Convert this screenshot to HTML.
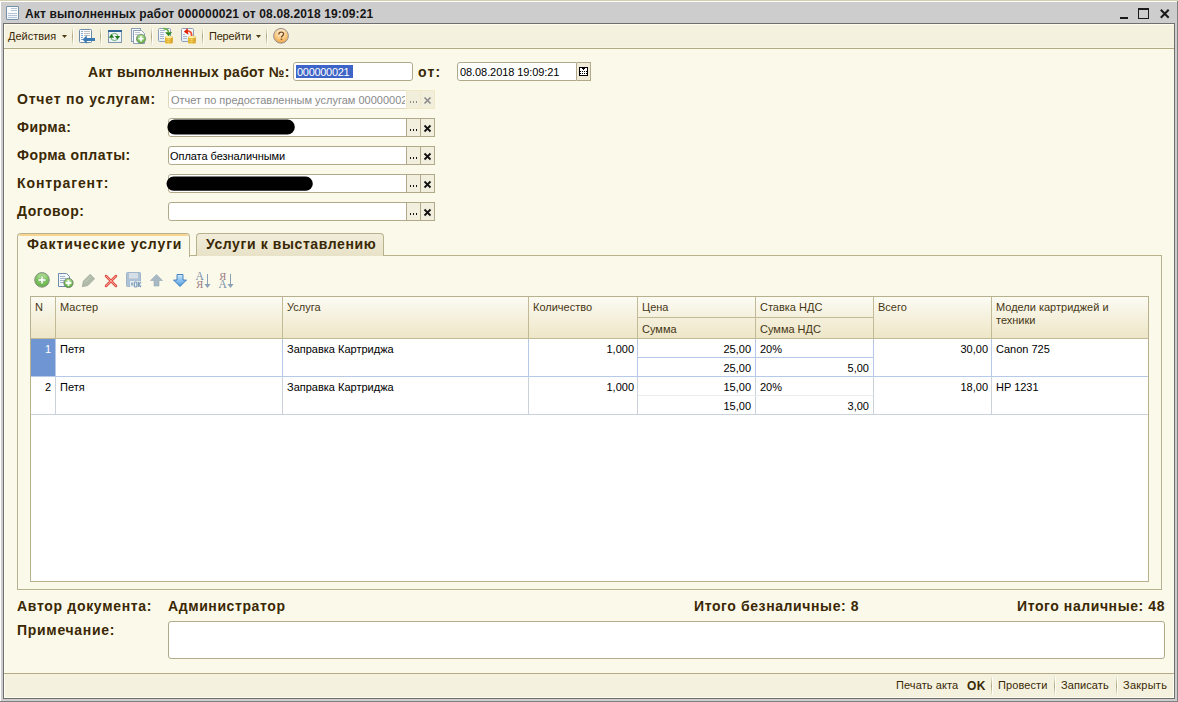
<!DOCTYPE html>
<html><head><meta charset="utf-8">
<style>
*{box-sizing:border-box}
html,body{margin:0;padding:0}
body{width:1178px;height:702px;overflow:hidden;position:relative;background:#cdcdcd;font-family:"Liberation Sans",sans-serif;font-size:11px;color:#000}
.a{position:absolute}
.t{position:absolute;white-space:nowrap;line-height:11px;font-size:11px;color:#000}
.tb{position:absolute;white-space:nowrap;line-height:14px;font-size:14px;font-weight:bold;color:#3a2804}
.br{color:#3a2804}
.hd{position:absolute;white-space:nowrap;line-height:11px;font-size:11px;color:#463714}
.fld{position:absolute;background:#fff;border:1px solid #b1aa8a;border-radius:3px 0 0 3px}
.btn{position:absolute;background:#f3f0df;border:1px solid #b1aa8a;border-left:none}
.sep{position:absolute;width:2px;border-left:1px solid #d9d2b4;border-right:1px solid #fffdf2}
</style></head><body>
<!-- window frame -->
<div class="a" style="left:0;top:0;width:1178px;height:1px;background:#d5d0b2"></div>
<div class="a" style="left:0;top:1px;width:1177px;height:1px;background:#fff"></div>
<div class="a" style="left:0;top:1px;width:1px;height:700px;background:#fff"></div>
<div class="a" style="left:1177px;top:1px;width:1px;height:701px;background:#808080"></div>
<div class="a" style="left:0;top:701px;width:1178px;height:1px;background:#808080"></div>

<!-- title bar -->
<div class="a" id="ticon" style="left:6px;top:6px;width:13px;height:14px;border:1px solid #7490a8;border-radius:1px;background:linear-gradient(#fff,#f0f5fa)">
  <div class="a" style="left:4px;top:1px;width:6px;height:1px;background:#b4c6d6"></div>
  <div class="a" style="left:4px;top:3px;width:6px;height:1px;background:#b4c6d6"></div>
  <div class="a" style="left:1px;top:6px;width:9px;height:1px;background:#b4c6d6"></div>
  <div class="a" style="left:1px;top:8px;width:9px;height:1px;background:#b4c6d6"></div>
  <div class="a" style="left:1px;top:10px;width:9px;height:1px;background:#b4c6d6"></div>
</div>
<div class="a" style="left:25px;top:8px;white-space:nowrap;font-weight:bold;font-size:12px;line-height:12px;color:#161616;letter-spacing:0.14px">Акт выполненных работ 000000021 от 08.08.2018 19:09:21</div>
<!-- min / max / close -->
<div class="a" style="left:1120px;top:17px;width:8px;height:2px;background:#1a1a1a"></div>
<div class="a" style="left:1138px;top:8px;width:11px;height:11px;border:1px solid #1a1a1a;border-top-width:2px"></div>
<svg class="a" style="left:1159px;top:8px" width="12" height="12" viewBox="0 0 12 12"><path d="M1.8 1.8L9.7 9.7M9.7 1.8L1.8 9.7" stroke="#1a1a1a" stroke-width="2.1"/></svg>

<!-- content border -->
<div class="a" style="left:3px;top:23px;width:1172px;height:676px;border:1px solid #6f6f6f;background:#fbf9ea"></div>

<!-- toolbar -->
<div class="a" id="toolbar" style="left:4px;top:24px;width:1170px;height:25px;background:#f4f2df;border-bottom:1px solid #b3ab86"></div>


<!-- toolbar content -->
<div class="t br" style="left:8px;top:31px">Действия</div>
<div class="t br" style="left:209px;top:31px;letter-spacing:-0.2px">Перейти</div>
<svg class="a" style="left:0;top:0" width="300" height="50" viewBox="0 0 300 50">
 <defs>
  <linearGradient id="sepg" x1="0" y1="0" x2="0" y2="1"><stop offset="0" stop-color="#f4f2df"/><stop offset="0.5" stop-color="#aea680"/><stop offset="1" stop-color="#f4f2df"/></linearGradient><linearGradient id="sepg2" x1="0" y1="0" x2="0" y2="1"><stop offset="0" stop-color="#f4f2df"/><stop offset="0.5" stop-color="#aea680"/><stop offset="1" stop-color="#f4f2df"/></linearGradient>
  <radialGradient id="helpg" cx="0.5" cy="0.3" r="0.75"><stop offset="0" stop-color="#fff4e0"/><stop offset="0.55" stop-color="#f8c880"/><stop offset="1" stop-color="#eb9a3a"/></radialGradient>
  <radialGradient id="grn2" cx="0.5" cy="0.3" r="0.75"><stop offset="0" stop-color="#c4e8a8"/><stop offset="0.6" stop-color="#78c05a"/><stop offset="1" stop-color="#5aa83e"/></radialGradient><linearGradient id="coinh" x1="0" y1="0" x2="1" y2="0"><stop offset="0" stop-color="#e8b830"/><stop offset="0.45" stop-color="#ffe878"/><stop offset="1" stop-color="#d89a20"/></linearGradient><linearGradient id="docg" x1="0" y1="0" x2="0" y2="1"><stop offset="0" stop-color="#ffffff"/><stop offset="1" stop-color="#e4eef8"/></linearGradient>
 </defs>
 <path d="M62 35h5l-2.5 3z" fill="#4a3a10"/>
 <path d="M256 35h5l-2.5 3z" fill="#4a3a10"/>
 <g>
  <rect x="72" y="27" width="1" height="19" fill="url(#sepg)"/><rect x="73" y="28" width="1" height="17" fill="#fffef6"/>
  <rect x="100" y="27" width="1" height="19" fill="url(#sepg)"/><rect x="101" y="28" width="1" height="17" fill="#fffef6"/>
  <rect x="151" y="27" width="1" height="19" fill="url(#sepg)"/><rect x="152" y="28" width="1" height="17" fill="#fffef6"/>
  <rect x="202" y="27" width="1" height="19" fill="url(#sepg)"/><rect x="203" y="28" width="1" height="17" fill="#fffef6"/>
  <rect x="266" y="27" width="1" height="19" fill="url(#sepg)"/><rect x="267" y="28" width="1" height="17" fill="#fffef6"/>
 </g>
 <!-- icon1 doc + left arrow -->
 <rect x="79.5" y="29.5" width="12" height="13" rx="1" fill="#fff" stroke="#6a8aa8"/>
 <g fill="#88aad0"><rect x="81" y="31" width="2" height="1"/><rect x="81" y="33" width="2" height="1"/><rect x="81" y="35" width="2" height="1"/><rect x="81" y="37" width="2" height="1"/><rect x="81" y="39" width="2" height="1"/></g>
 <g fill="#c0c0c0"><rect x="84" y="31" width="6" height="1"/><rect x="84" y="33" width="6" height="1"/><rect x="84" y="35" width="6" height="1"/></g>
 <path d="M82.5 39.5L86.8 35.3V38H95V41H86.8V43.8z" fill="#3d7ab4"/>
 <!-- icon2 window refresh -->
 <rect x="108.5" y="30.5" width="13" height="12" fill="#eef3f8" stroke="#7f96ac"/>
 <rect x="108" y="30" width="14" height="2" fill="#2d6898"/>
 <circle cx="114.5" cy="37" r="3.6" fill="none" stroke="#5aa85a" stroke-width="0.9"/>
 <path d="M108.8 37.8L111.5 34L114.2 37.8z" fill="#1f7a1f"/>
 <path d="M114.8 36L120.2 36L117.5 39.6z" fill="#1f7a1f"/>
 <!-- icon3 copy + plus -->
 <rect x="131.5" y="28.5" width="9" height="13" fill="#f4f6fa" stroke="#8a9cb6"/>
 <path d="M133.5 30.5H141.5L144.5 33.5V43.5H133.5z" fill="#fff" stroke="#8a9eb4"/>
 <g fill="#b8c4d0"><rect x="135" y="32" width="5" height="1"/><rect x="135" y="34" width="3" height="1"/></g>
 <circle cx="141" cy="38.8" r="4.6" fill="url(#grn2)" stroke="#7a8a78" stroke-width="0.9"/>
 <path d="M140.2 36.2h1.6v1.8h1.8v1.6h-1.8v1.8h-1.6v-1.8h-1.8v-1.6h1.8z" fill="#fff"/>
 <!-- icon4 doc + green arrow + coins -->
 <rect x="158.5" y="28.5" width="12" height="13" rx="1.2" fill="url(#docg)" stroke="#8ba0b6"/>
 <g fill="#a9b9ca"><rect x="160" y="30" width="5" height="1"/><rect x="160" y="32" width="4" height="1"/><rect x="160" y="34" width="4" height="1"/><rect x="160" y="36" width="4" height="1"/><rect x="160" y="38" width="4" height="1"/></g>
 <path d="M163.5 28.6C166.5 28.6 168.3 30 168.6 32.5" fill="none" stroke="#6ab04a" stroke-width="1.7"/>
 <path d="M165 32.2H172.2L168.6 36.2z" fill="#2f861f"/>
 <g id="coins4">
 <rect x="165" y="36" width="7.8" height="7.8" rx="2.2" fill="url(#coinh)"/>
 <g fill="#d49a18" opacity="0.85"><rect x="165.3" y="38.4" width="7.2" height="0.9"/><rect x="165.3" y="40.4" width="7.2" height="0.9"/><rect x="165.3" y="42.3" width="7.2" height="0.8"/></g>
 <ellipse cx="168.9" cy="37.2" rx="3.2" ry="1" fill="#fff5a8"/>
 </g>
 <!-- icon5 doc + red arrow + coins -->
 <rect x="181.5" y="28.5" width="12" height="13" rx="1.2" fill="url(#docg)" stroke="#8ba0b6"/>
 <g fill="#a9b9ca"><rect x="183" y="34" width="2" height="1"/><rect x="183" y="36" width="4" height="1"/><rect x="183" y="38" width="4" height="1"/></g>
 <path d="M187 30.8C190.5 30.8 191.8 32.5 191.6 36" fill="none" stroke="#f0502c" stroke-width="1.8"/>
 <path d="M183.8 31.8L187.6 27.9L188.4 34.8z" fill="#e2260e"/>
 <rect x="188" y="36" width="7.8" height="7.8" rx="2.2" fill="url(#coinh)"/>
 <g fill="#d49a18" opacity="0.85"><rect x="188.3" y="38.4" width="7.2" height="0.9"/><rect x="188.3" y="40.4" width="7.2" height="0.9"/><rect x="188.3" y="42.3" width="7.2" height="0.8"/></g>
 <ellipse cx="191.9" cy="37.2" rx="3.2" ry="1" fill="#fff5a8"/>
 <!-- help -->
 <circle cx="281" cy="35.8" r="7.4" fill="url(#helpg)" stroke="#8a8a90" stroke-width="0.9"/>
 <path d="M278.8 34.4C278.8 32.8 280 32.1 281.2 32.1C282.6 32.1 283.6 33 283.6 34.1C283.6 35.8 281.4 35.9 281.4 37.6" fill="none" stroke="#7a4a1e" stroke-width="1.3"/><rect x="280.7" y="38.6" width="1.5" height="1.3" fill="#7a4a1e"/>
</svg>


<!-- header -->
<div class="tb" style="left:88px;top:65px;letter-spacing:0.28px">Акт выполненных работ №:</div>
<div class="fld" style="left:293px;top:62px;width:120px;height:19px;border-radius:3px"></div>
<div class="a" style="left:296px;top:65px;width:57px;height:13px;background:#3d64c6"></div>
<div class="t" style="left:297px;top:67px;color:#fff;letter-spacing:-0.3px">000000021</div>
<div class="tb" style="left:418px;top:65px;letter-spacing:1.2px">от:</div>
<div class="fld" style="left:457px;top:62px;width:120px;height:19px"></div>
<div class="btn" style="left:577px;top:62px;width:14px;height:19px;background:#efebd8"></div>
<svg class="a" style="left:576px;top:62px" width="15" height="19" viewBox="576 62 15 19" shape-rendering="crispEdges">
 <rect x="579" y="67" width="9" height="9" fill="#000"/>
 <rect x="580" y="69" width="7" height="6" fill="#fff"/>
 <rect x="580" y="68" width="2" height="1" fill="#fff"/><rect x="585" y="68" width="2" height="1" fill="#fff"/>
 <rect x="582" y="68" width="3" height="1" fill="#000"/><rect x="583" y="69" width="1" height="1" fill="#000"/>
 <rect x="582" y="71" width="1" height="1" fill="#000"/><rect x="584" y="71" width="1" height="1" fill="#000"/>
 <rect x="582" y="73" width="1" height="1" fill="#000"/><rect x="584" y="73" width="1" height="1" fill="#000"/>
 <rect x="580" y="71" width="1" height="1" fill="#000"/><rect x="586" y="71" width="1" height="1" fill="#000"/><rect x="580" y="73" width="1" height="1" fill="#000"/><rect x="586" y="73" width="1" height="1" fill="#000"/>
</svg>
<div class="t" style="left:460px;top:67px;letter-spacing:-0.08px">08.08.2018 19:09:21</div>

<div class="tb" style="left:17px;top:92px;letter-spacing:0.8px">Отчет по услугам:</div>
<div class="tb" style="left:17px;top:120px;letter-spacing:0.45px">Фирма:</div>
<div class="tb" style="left:17px;top:148px;letter-spacing:0.45px">Форма оплаты:</div>
<div class="tb" style="left:17px;top:176px;letter-spacing:0.9px">Контрагент:</div>
<div class="tb" style="left:17px;top:204px;letter-spacing:0.55px">Договор:</div>

<!-- field 1 disabled -->
<div class="fld" style="left:168px;top:90px;width:239px;height:19px;border-color:#ddd7bd;overflow:hidden">
  <div class="a" style="left:0;top:0;width:236px;height:17px;overflow:hidden"><div class="t" style="left:2px;top:4px;color:#8a8a8a">Отчет по предоставленным услугам 00000002</div></div>
</div>
<div class="btn" style="left:406px;top:90px;width:15px;height:19px;border:1px solid #f0e8c6;background:#f2eedc"></div>
<div class="btn" style="left:420px;top:90px;width:15px;height:19px;border:1px solid #f0e8c6;background:#f2eedc"></div>
<!-- field 2 -->
<div class="fld" style="left:168px;top:118px;width:239px;height:19px"></div>
<svg class="a" style="left:160px;top:114px" width="150" height="26" viewBox="160 114 150 26"><rect x="167.4" y="119.6" width="127.4" height="14.8" rx="7.4" fill="#000"/></svg>
<!-- field 3 -->
<div class="fld" style="left:168px;top:146px;width:239px;height:19px"></div>
<div class="t" style="left:170px;top:151px;letter-spacing:-0.05px">Оплата безналичными</div>
<!-- field 4 -->
<div class="fld" style="left:168px;top:174px;width:239px;height:19px"></div>
<svg class="a" style="left:160px;top:170px" width="160" height="26" viewBox="160 170 160 26"><rect x="166.5" y="176.6" width="146.3" height="14.2" rx="7.1" fill="#000"/></svg>
<!-- field 5 -->
<div class="fld" style="left:168px;top:202px;width:239px;height:19px"></div>
<svg class="a" style="left:400px;top:85px" width="40" height="140" viewBox="400 85 40 140">
 <g fill="#f2efde" stroke="#b1aa8a">
  <rect x="406.5" y="118.5" width="14" height="18"/><rect x="420.5" y="118.5" width="14" height="18"/>
  <rect x="406.5" y="146.5" width="14" height="18"/><rect x="420.5" y="146.5" width="14" height="18"/>
  <rect x="406.5" y="174.5" width="14" height="18"/><rect x="420.5" y="174.5" width="14" height="18"/>
  <rect x="406.5" y="202.5" width="14" height="18"/><rect x="420.5" y="202.5" width="14" height="18"/>
 </g>
 <g id="dots1" fill="#111" shape-rendering="crispEdges"><rect x="410" y="129" width="1" height="2"/><rect x="413" y="129" width="1" height="2"/><rect x="416" y="129" width="1" height="2"/><rect x="410" y="157" width="1" height="2"/><rect x="413" y="157" width="1" height="2"/><rect x="416" y="157" width="1" height="2"/><rect x="410" y="185" width="1" height="2"/><rect x="413" y="185" width="1" height="2"/><rect x="416" y="185" width="1" height="2"/><rect x="410" y="213" width="1" height="2"/><rect x="413" y="213" width="1" height="2"/><rect x="416" y="213" width="1" height="2"/></g>
 <g stroke="#111" stroke-width="1.8">
  <path d="M424.5 125.5l6 6M430.5 125.5l-6 6"/>
  <path d="M424.5 153.5l6 6M430.5 153.5l-6 6"/>
  <path d="M424.5 181.5l6 6M430.5 181.5l-6 6"/>
  <path d="M424.5 209.5l6 6M430.5 209.5l-6 6"/>
 </g>
 <g fill="#8a8a8a" shape-rendering="crispEdges"><rect x="410" y="101" width="1" height="2"/><rect x="413" y="101" width="1" height="2"/><rect x="416" y="101" width="1" height="2"/></g>
 <path d="M424.5 97.5l6 6M430.5 97.5l-6 6" stroke="#8a8a8a" stroke-width="1.6"/>
</svg>


<!-- tabs -->
<div class="a" style="left:17px;top:255px;width:1145px;height:335px;border:1px solid #b8b18e"></div>
<div class="a" style="left:196px;top:233px;width:188px;height:23px;border:1px solid #b8b18e;border-bottom:none;border-radius:4px 4px 0 0;background:linear-gradient(#f1edda,#e8e2c8)"></div>
<div class="a" style="left:17px;top:233px;width:173px;height:24px;border:1px solid #b8b18e;border-bottom:none;border-radius:4px 4px 0 0;background:#fbf9ea">
  <div class="a" style="left:1px;top:0;right:1px;height:2px;background:#f7d591;border-radius:3px 3px 0 0"></div>
</div>
<div class="tb" style="left:27px;top:237px;letter-spacing:0.9px">Фактические услуги</div>
<div class="tb" style="left:206px;top:237px;letter-spacing:0.6px">Услуги к выставлению</div>

<!-- table toolbar icons -->
<svg class="a" style="left:0;top:260px" width="250" height="35" viewBox="0 260 250 35">
 <defs>
  <radialGradient id="grn" cx="0.5" cy="0.3" r="0.75"><stop offset="0" stop-color="#c4e8a8"/><stop offset="0.6" stop-color="#78c05a"/><stop offset="1" stop-color="#5aa83e"/></radialGradient>
  <linearGradient id="dwn" x1="0" y1="0" x2="0" y2="1"><stop offset="0" stop-color="#cdeafc"/><stop offset="1" stop-color="#4a98e0"/></linearGradient>
 </defs>
 <circle cx="42" cy="279.9" r="7.3" fill="url(#grn)" stroke="#8a9088" stroke-width="1"/>
 <path d="M40.8 276h2.4v2.8h2.8v2.4h-2.8v2.8h-2.4v-2.8h-2.8v-2.4h2.8z" fill="#fff" stroke="#4e9a36" stroke-width="0.5"/>
 <path d="M58.5 273.5H66.5L69.5 276.5V286.5H58.5z" fill="#f4f7fb" stroke="#6f8cab"/>
 <g fill="#a0b4c8"><rect x="60" y="276" width="5" height="1"/><rect x="60" y="278" width="6" height="1"/><rect x="60" y="280" width="4" height="1"/><rect x="60" y="282" width="4" height="1"/></g>
 <circle cx="68.5" cy="283" r="4.6" fill="url(#grn)" stroke="#6a7a68" stroke-width="0.9"/>
 <path d="M67.6 280.2h1.8v1.9h1.9v1.8h-1.9v1.9h-1.8v-1.9h-1.9v-1.8h1.9z" fill="#fff"/>
 <path d="M82.3 286.7L83.3 281.2L90.2 274.3L94.6 278.7L87.8 285.6z" fill="#b0baa8" stroke="#9ea894" stroke-width="0.7"/><path d="M85 282.5L91.5 276" stroke="#c8d0c0" stroke-width="0.9"/>
 <path d="M106 276L116 286M116 276L106 286" stroke="#e25048" stroke-width="2.5" stroke-linecap="round"/>
 <path d="M106 276L116 286M116 276L106 286" stroke="#f7a898" stroke-width="0.9"/>
 <rect x="126.5" y="272.5" width="14" height="14" rx="0.8" fill="#aec2d6" stroke="#a0b6cc"/>
 <rect x="129.5" y="273.5" width="8" height="4.5" fill="#d2e0ea" stroke="#e4e0e0" stroke-width="0.8"/>
 <rect x="130" y="281" width="11" height="6" fill="#e8eef2"/>
 <rect x="131" y="282.5" width="2" height="3" fill="#98b0c4"/>
 <rect x="134.3" y="282" width="2.6" height="5" rx="1" fill="none" stroke="#7f9db8" stroke-width="1.2"/>
 <path d="M138.5 281.8V287M141 281.8L138.8 284.4L141 287" fill="none" stroke="#7f9db8" stroke-width="1.2"/>
 <path d="M150.5 280.5L156.5 274.5L162.5 280.5H159V286H154V280.5z" fill="#a8b8c4" stroke="#98a8b4" stroke-width="0.6"/>
 <path d="M173.5 280L177 280V274.5H183V280H186.5L180 286.5z" fill="url(#dwn)" stroke="#2a6ab0" stroke-width="0.8"/>
 <text x="195.6" y="280" font-family="Liberation Serif" font-size="11.5" fill="#7890a8">A</text>
 <text x="196.2" y="288" font-family="Liberation Serif" font-size="10.5" fill="#9a7a84">Я</text>
 <path d="M207.5 274V285" stroke="#8aa0b4" stroke-width="1"/><path d="M204.5 284H210.5L207.5 288z" fill="#8aa0b4"/>
 <text x="219.2" y="280" font-family="Liberation Serif" font-size="10.5" fill="#9a7a84">Я</text>
 <text x="218.6" y="288" font-family="Liberation Serif" font-size="11.5" fill="#7890a8">A</text>
 <path d="M230.5 274V285" stroke="#8aa0b4" stroke-width="1"/><path d="M227.5 284H233.5L230.5 288z" fill="#8aa0b4"/>
</svg>


<!-- table -->
<div class="a" style="left:30px;top:296px;width:1119px;height:286px;border:1px solid #b8b18e;background:#fff"></div>
<div class="a" style="left:31px;top:297px;width:1117px;height:41px;background:linear-gradient(#fcfbf3,#eee6c7)"></div>
<svg class="a" style="left:0;top:290px" width="1178" height="130" viewBox="0 290 1178 130" shape-rendering="crispEdges">
 <g fill="#c2b996"><rect x="55" y="297" width="1" height="41"/><rect x="282" y="297" width="1" height="41"/><rect x="528" y="297" width="1" height="41"/><rect x="637" y="297" width="1" height="41"/><rect x="755" y="297" width="1" height="41"/><rect x="873" y="297" width="1" height="41"/><rect x="991" y="297" width="1" height="41"/><rect x="31" y="338" width="1117" height="1"/><rect x="638" y="317" width="235" height="1"/></g>
 <rect x="31" y="339" width="24" height="37" fill="#6f96d2"/>
 <g fill="#b6cae8"><rect x="55" y="339" width="1" height="37"/><rect x="282" y="339" width="1" height="37"/><rect x="528" y="339" width="1" height="37"/><rect x="637" y="339" width="1" height="37"/><rect x="755" y="339" width="1" height="37"/><rect x="873" y="339" width="1" height="37"/><rect x="991" y="339" width="1" height="37"/><rect x="31" y="376" width="1117" height="1"/><rect x="638" y="357" width="235" height="1"/></g>
 <g fill="#cbd2dc"><rect x="55" y="377" width="1" height="37"/><rect x="282" y="377" width="1" height="37"/><rect x="528" y="377" width="1" height="37"/><rect x="637" y="377" width="1" height="37"/><rect x="755" y="377" width="1" height="37"/><rect x="873" y="377" width="1" height="37"/><rect x="991" y="377" width="1" height="37"/><rect x="31" y="414" width="1117" height="1"/></g>
 <rect x="638" y="395" width="235" height="1" fill="#ebebeb"/>
</svg>
<div class="hd" style="left:35px;top:302px;">N</div>
<div class="hd" style="left:60px;top:302px;">Мастер</div>
<div class="hd" style="left:287px;top:302px;">Услуга</div>
<div class="hd" style="left:533px;top:302px;">Количество</div>
<div class="hd" style="left:642px;top:302px;">Цена</div>
<div class="hd" style="left:642px;top:324px;">Сумма</div>
<div class="hd" style="left:760px;top:302px;">Ставка НДС</div>
<div class="hd" style="left:760px;top:324px;">Сумма НДС</div>
<div class="hd" style="left:878px;top:302px;">Всего</div>
<div class="hd" style="left:996px;top:302px;">Модели картриджей и</div>
<div class="hd" style="left:996px;top:315px;">техники</div>
<div class="t" style="right:1127px;top:344px;color:#fff">1</div>
<div class="t" style="left:60px;top:344px;">Петя</div>
<div class="t" style="left:287px;top:344px;">Заправка Картриджа</div>
<div class="t" style="right:544px;top:344px;">1,000</div>
<div class="t" style="right:427px;top:344px;">25,00</div>
<div class="t" style="left:760px;top:344px;">20%</div>
<div class="t" style="right:190px;top:344px;">30,00</div>
<div class="t" style="left:996px;top:344px;">Canon 725</div>
<div class="t" style="right:427px;top:363px;">25,00</div>
<div class="t" style="right:309px;top:363px;">5,00</div>
<div class="t" style="right:1127px;top:382px;">2</div>
<div class="t" style="left:60px;top:382px;">Петя</div>
<div class="t" style="left:287px;top:382px;">Заправка Картриджа</div>
<div class="t" style="right:544px;top:382px;">1,000</div>
<div class="t" style="right:427px;top:382px;">15,00</div>
<div class="t" style="left:760px;top:382px;">20%</div>
<div class="t" style="right:190px;top:382px;">18,00</div>
<div class="t" style="left:996px;top:382px;">HP 1231</div>
<div class="t" style="right:427px;top:401px;">15,00</div>
<div class="t" style="right:309px;top:401px;">3,00</div>


<!-- bottom -->
<div class="tb" style="left:17px;top:599px;letter-spacing:0.69px">Автор документа:</div>
<div class="tb" style="left:168px;top:599px;letter-spacing:0.6px">Администратор</div>
<div class="tb" style="left:694px;top:599px;letter-spacing:0.6px">Итого безналичные: 8</div>
<div class="tb" style="left:1017px;top:599px;letter-spacing:0.58px">Итого наличные: 48</div>
<div class="tb" style="left:17px;top:623px;letter-spacing:0.7px">Примечание:</div>
<div class="a" style="left:168px;top:621px;width:997px;height:38px;border:1px solid #b1aa8a;border-radius:3px;background:#fff"></div>

<!-- footer -->
<div class="a" id="footer" style="left:4px;top:673px;width:1170px;height:25px;background:#f4f2df;border-top:1px solid #b3ab86"></div>
<div class="a" style="left:4px;top:24px;width:1170px;height:1px;background:#fffdf0"></div>
<div class="a" style="left:4px;top:47px;width:1170px;height:1px;background:#f8f6e6"></div>
<div class="a" style="left:4px;top:697px;width:1170px;height:1px;background:#fffdf0"></div>
<div class="a" style="left:4px;top:24px;width:1px;height:24px;background:#fffff2"></div>
<div class="a" style="left:4px;top:49px;width:1px;height:624px;background:#fffff2"></div>
<div class="a" style="left:4px;top:674px;width:1px;height:24px;background:#fffff2"></div>
<div class="a" style="left:1173px;top:674px;width:1px;height:24px;background:#fffff2"></div>


<!-- footer items -->
<div class="t br" style="left:896px;top:680px;letter-spacing:0.1px">Печать акта</div>
<div class="a" style="left:967px;top:680px;white-space:nowrap;font-weight:bold;font-size:12px;line-height:12px;color:#3a2804;letter-spacing:0.4px">OK</div>
<div class="t br" style="left:998px;top:680px;letter-spacing:0.1px">Провести</div>
<div class="t br" style="left:1061px;top:680px;letter-spacing:0.1px">Записать</div>
<div class="t br" style="left:1123px;top:680px;letter-spacing:0.25px">Закрыть</div>
<svg class="a" style="left:980px;top:674px" width="150" height="24" viewBox="980 674 150 24">
 <rect x="991" y="676" width="1" height="20" fill="url(#sepg2)"/><rect x="992" y="677" width="1" height="18" fill="#fffef6"/>
 <rect x="1054" y="676" width="1" height="20" fill="url(#sepg2)"/><rect x="1055" y="677" width="1" height="18" fill="#fffef6"/>
 <rect x="1116" y="676" width="1" height="20" fill="url(#sepg2)"/><rect x="1117" y="677" width="1" height="18" fill="#fffef6"/>
</svg>
</body></html>
